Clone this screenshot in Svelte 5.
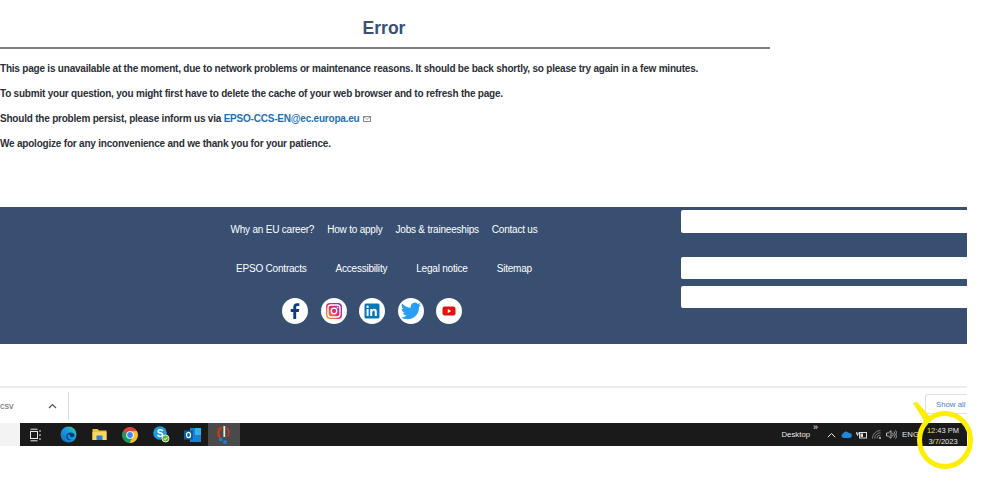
<script>
	const row1 = ['Why an EU career?', 'How to apply', 'Jobs & traineeships', 'Contact us'];
	const row2 = ['EPSO Contracts', 'Accessibility', 'Legal notice', 'Sitemap'];
</script>

<div class="page">
	<main class="content">
		<h1>Error</h1>
		<p>This page is unavailable at the moment, due to network problems or maintenance reasons. It should be back shortly, so please try again in a few minutes.</p>
		<p>To submit your question, you might first have to delete the cache of your web browser and to refresh the page.</p>
		<p>
			Should the problem persist, please inform us via <span class="mail">EPSO-CCS-EN@ec.europa.eu</span>
			<svg class="mail-icon" width="8" height="6" viewBox="0 0 8 6"><rect x=".5" y=".5" width="7" height="5" fill="none" stroke="#8a8a8a"/><path d="M.5.8 4 3.4 7.5.8" fill="none" stroke="#8a8a8a" stroke-width=".8"/></svg>
		</p>
		<p>We apologize for any inconvenience and we thank you for your patience.</p>
	</main>

	<footer class="footer">
		<div class="links">
			<nav class="row-one">
				{#each row1 as item}<span>{item}</span>{/each}
			</nav>
			<nav class="row-two">
				{#each row2 as item}<span>{item}</span>{/each}
			</nav>
			<div class="social">
				<span class="circle">
					<svg width="26" height="26" viewBox="0 0 26 26"><path d="M14.2 21v-7h2.6l.4-2.9h-3V9.400c0-.9.3-1.400 1.500-1.400h1.600V5.400c-.4 0-1.200-.1-2.200-.1-2.300 0-3.800 1.300-3.800 3.800v2H8.700V14h2.600v7z" fill="#0b3c87"/></svg>
				</span>
				<span class="circle">
					<svg width="26" height="26" viewBox="0 0 26 26">
						<defs><linearGradient id="ig" x1="0" y1="1" x2="1" y2="0"><stop offset="0" stop-color="#fdb32b"/><stop offset=".5" stop-color="#e5296b"/><stop offset="1" stop-color="#6a3bc9"/></linearGradient></defs>
						<rect x="5" y="5" width="16" height="16" rx="4" fill="url(#ig)"/>
						<rect x="7" y="7" width="12" height="12" rx="3" fill="none" stroke="#fff" stroke-width="1.300"/>
						<circle cx="13" cy="13" r="2.800" fill="none" stroke="#fff" stroke-width="1.300"/>
						<circle cx="16.500" cy="9.500" r=".8" fill="#fff"/>
					</svg>
				</span>
				<span class="circle">
					<svg width="26" height="26" viewBox="0 0 26 26">
						<rect x="5.500" y="5.500" width="15" height="15" rx="1.500" fill="#0a77b5"/>
						<rect x="7.600" y="11" width="2" height="7" fill="#fff"/>
						<circle cx="8.600" cy="8.800" r="1.200" fill="#fff"/>
						<path d="M11.200 11h1.900v1c.4-.7 1.100-1.200 2.200-1.200 1.900 0 2.500 1.200 2.500 3V18h-2v-3.700c0-.9-.3-1.600-1.200-1.600s-1.400.7-1.400 1.600V18h-2z" fill="#fff"/>
					</svg>
				</span>
				<span class="circle">
					<svg width="26" height="26" viewBox="0 0 24 24"><path transform="translate(2.600 2.600) scale(.78)" d="M23.950 4.570a10 10 0 0 1-2.820.77 4.960 4.960 0 0 0 2.160-2.720c-.95.550-2 .96-3.130 1.190a4.920 4.920 0 0 0-8.380 4.480C7.690 8.090 4.070 6.130 1.640 3.160a4.820 4.820 0 0 0-.67 2.480c0 1.710.87 3.210 2.190 4.100a4.900 4.900 0 0 1-2.230-.62v.06a4.920 4.920 0 0 0 3.950 4.830 5 5 0 0 1-2.210.08 4.940 4.940 0 0 0 4.600 3.420A9.870 9.870 0 0 1 0 19.540a14 14 0 0 0 7.560 2.210c9.050 0 14-7.500 14-13.980 0-.21 0-.42-.02-.63a9.940 9.940 0 0 0 2.410-2.570z" fill="#2a9df4"/></svg>
				</span>
				<span class="circle">
					<svg width="26" height="26" viewBox="0 0 26 26"><rect x="6.500" y="8.500" width="13" height="9" rx="2.200" fill="#e8110f"/><path d="M11.800 11v4l3.400-2z" fill="#fff"/></svg>
				</span>
			</div>
		</div>
		<div class="fields">
			<div class="field"></div>
			<div class="field second"></div>
			<div class="field third"></div>
		</div>
	</footer>

	<section class="downloads">
		<div class="file">
			<span class="file-name">csv</span>
			<svg width="9" height="6" viewBox="0 0 9 6"><path d="M1 5l3.500-3.500L8 5" fill="none" stroke="#555" stroke-width="1.200"/></svg>
		</div>
		<div class="show-all">Show all</div>
	</section>

	<div class="taskbar-row">
		<div class="taskbar">
			<div class="apps">
				<span class="app first">
					<svg width="14" height="14" viewBox="0 0 14 14" fill="none" stroke="#e8e8e8"><rect x="1.500" y="3.500" width="7" height="7"/><path d="M1.500 1.200h7M1.500 12.800h7M11 2v2M11 6v2M11 10v2" /></svg>
				</span>
				<span class="app">
					<svg width="17" height="17" viewBox="0 0 17 17">
						<defs><linearGradient id="edge" x1="0" y1="1" x2="1" y2="0"><stop offset="0" stop-color="#0f6cbd"/><stop offset=".6" stop-color="#1b9de2"/><stop offset="1" stop-color="#45d17c"/></linearGradient></defs>
						<circle cx="8.500" cy="8.500" r="8" fill="url(#edge)"/>
						<path d="M7 8.500c1-2.500 6-3 7.500.5.200 2-2 2.500-3.500 2-1.500-.5-.5-2-2-2.500-1.500-.3-2 1.500-1 3.500 1 1.500 3 2 4 1.800-3 1.500-7-.5-5-5.800z" fill="#0a3d7a"/>
					</svg>
				</span>
				<span class="app">
					<svg width="15" height="13" viewBox="0 0 15 13"><path d="M.5 1h5l1.500 1.500h7.500V12H.5z" fill="#f2c230"/><rect x=".5" y="4" width="14" height="8" fill="#f7d661"/><rect x="4.500" y="7.500" width="6" height="4.500" fill="#2f80c8"/></svg>
				</span>
				<span class="app">
					<svg width="16" height="16" viewBox="0 0 16 16">
						<circle cx="8" cy="8" r="7.800" fill="#db4437"/>
						<path d="M8 8 14.800 4A7.800 7.800 0 0 0 1.500 3.600L4.500 9z" fill="#db4437"/>
						<path d="M1.500 3.600A7.800 7.800 0 0 0 7.500 15.800L10.800 10 5 9z" fill="#0f9d58"/>
						<path d="M14.800 4.100A7.800 7.800 0 0 1 7.500 15.800L10.900 9.800 8 4.500z" fill="#fbc02d"/>
						<circle cx="8" cy="8" r="3.800" fill="#fff"/><circle cx="8" cy="8" r="2.900" fill="#4285f4"/>
					</svg>
				</span>
				<span class="app">
					<svg width="17" height="17" viewBox="0 0 17 17">
						<circle cx="7" cy="7" r="6.800" fill="#1b9ce0"/>
						<text x="7" y="10.500" class="skype">S</text>
						<circle cx="12.500" cy="12.500" r="3.500" fill="#6bb12f" stroke="#fff" stroke-width=".8"/>
						<path d="M10.900 12.500l1.200 1.200 2-2.200" fill="none" stroke="#fff"/>
					</svg>
				</span>
				<span class="app">
					<svg width="17" height="14" viewBox="0 0 17 14">
						<rect x="6" y="0" width="11" height="14" fill="#1a80cf"/>
						<rect x="11" y="0" width="6" height="7" fill="#35b0ea"/>
						<rect x="0" y="2.500" width="9" height="9" fill="#0a5fab"/>
						<ellipse cx="4.500" cy="7" rx="2" ry="2.600" fill="none" stroke="#fff" stroke-width="1.200"/>
					</svg>
				</span>
				<span class="app active">
					<svg width="16" height="20" viewBox="0 0 16 20">
						<path d="M6 2.500a6 6 0 0 0-2 9.800" fill="none" stroke="#c8391a" stroke-width="2.400"/>
						<path d="M10.500 2.500a6 6 0 0 1 1 8.800" fill="none" stroke="#c8391a" stroke-width="1.600"/>
						<rect x="7.400" y="1" width="1.800" height="11" fill="#e8e8e8"/>
						<circle cx="4.800" cy="14.500" r="2" fill="#2579c9"/>
						<circle cx="9" cy="17" r="2" fill="#2579c9"/>
					</svg>
				</span>
			</div>
			<div class="tray">
				<span class="desktop">Desktop</span>
				<span class="more">»</span>
				<svg class="caret" width="9" height="6" viewBox="0 0 9 6"><path d="M.8 5.200 4.500 1.500l3.700 3.700" fill="none" stroke="#eee" stroke-width="1"/></svg>
				<svg class="cloud" width="11" height="7" viewBox="0 0 11 7"><path d="M2.500 7a2.300 2.300 0 0 1-.3-4.500A3.300 3.300 0 0 1 8 2a2.500 2.500 0 0 1 .7 5z" fill="#1f86d8"/></svg>
				<svg class="battery" width="11" height="8" viewBox="0 0 11 8"><rect x="3.500" y="1.500" width="7" height="5.500" fill="none" stroke="#ddd"/><rect x="4.500" y="2.500" width="2.500" height="3.500" fill="#ddd"/><path d="M.5 1v2M2 1v2M0 3h3M1.500 3v2" stroke="#ddd" stroke-width=".8"/></svg>
				<svg class="wifi" width="10" height="9" viewBox="0 0 10 9"><path d="M.5 8.500a8 8 0 0 1 8-8M2.800 8.500a5.700 5.700 0 0 1 5.700-5.700M5 8.500a3.500 3.500 0 0 1 3.500-3.500" fill="none" stroke="#999" stroke-width=".8"/><circle cx="8" cy="8" r="1" fill="#ccc"/></svg>
				<svg class="volume" width="11" height="9" viewBox="0 0 11 9"><path d="M.5 3v3h1.800L5 8.300V.7L2.300 3z" fill="none" stroke="#ddd" stroke-width=".8"/><path d="M6.500 2.800a2.500 2.500 0 0 1 0 3.400M8 1.500a4.500 4.500 0 0 1 0 6M9.500.5a6 6 0 0 1 0 8" fill="none" stroke="#ddd" stroke-width=".7"/></svg>
				<span class="lang">ENG</span>
				<div class="clock">
					<span><i>12</i>:43 PM</span>
					<span>3<i>/7/</i>2023</span>
				</div>
			</div>
		</div>
	</div>

	<svg class="callout" width="70" height="75" viewBox="0 0 70 75">
		<path d="M0 1 L4 0 L18 16 L13 22z" fill="#ffee00"/>
		<ellipse cx="32" cy="38" rx="25.500" ry="26.500" fill="none" stroke="#ffee00" stroke-width="5"/>
	</svg>
</div>

<style>
	:global(body) {
		margin: 0;
		background: #fff;
	}

	.page {
		position: relative;
		width: 983px;
		height: 477px;
		overflow: hidden;
		font-family: 'Liberation Sans', Arial, sans-serif;
	}

	.content {
		width: 770px;
		height: 207px;
		font-size: 10px;
		letter-spacing: -0.21px;
		font-weight: 700;
		color: #2b3038;
	}

	h1 {
		margin: 0 0 14px;
		padding: 18px 2px 0 0;
		height: 29px;
		border-bottom: 2px solid #808080;
		text-align: center;
		font-size: 17.5px;
		letter-spacing: 0;
		line-height: 21px;
		color: #3a5174;
	}

	p {
		margin: 0 0 13px;
		line-height: 12px;
		white-space: nowrap;
	}

	.mail {
		color: #1f6fb2;
	}

	.mail-icon {
		margin-left: 1px;
	}

	.footer {
		display: grid;
		grid-template-columns: 681px 286px;
		width: 967px;
		height: 137px;
		background: #384f72;
		color: #fff;
		font-size: 10px;
		letter-spacing: -0.21px;
	}

	.links {
		display: flex;
		flex-direction: column;
		align-items: center;
		padding-left: 87px;
		box-sizing: border-box;
	}

	.row-one,
	.row-two {
		display: flex;
		white-space: nowrap;
		line-height: 12px;
	}

	.row-one {
		gap: 13px;
		margin-top: 17px;
	}

	.row-two {
		gap: 29px;
		margin-top: 27px;
	}

	.social {
		display: flex;
		gap: 12.5px;
		margin: 23px 24px 0 0;
	}

	.circle {
		display: flex;
		width: 26px;
		height: 26px;
		border-radius: 50%;
		background: #fff;
	}

	.fields {
		display: flex;
		flex-direction: column;
		padding-top: 3px;
	}

	.field {
		height: 23px;
		background: #fff;
		border-radius: 2px 0 0 2px;
	}

	.field.second {
		margin-top: 24px;
		height: 22px;
	}

	.field.third {
		margin-top: 7px;
		height: 22px;
	}

	.downloads {
		display: flex;
		align-items: center;
		justify-content: space-between;
		width: 967px;
		height: 37px;
		margin-top: 42px;
		border-top: 2px solid #ececec;
		box-sizing: border-box;
		font-size: 9px;
	}

	.file {
		display: flex;
		align-items: center;
		justify-content: space-between;
		width: 69px;
		height: 28px;
		padding-right: 11px;
		box-sizing: border-box;
		border-right: 1px solid #ddd;
		color: #666;
	}

	.show-all {
		align-self: flex-start;
		width: 42px;
		height: 20px;
		margin-top: 6px;
		padding-left: 10px;
		line-height: 19px;
		color: #4f7cd8;
		border: 1px solid #e0e0e0;
		border-right: 0;
		border-radius: 3px 0 0 3px;
		box-sizing: border-box;
		font-size: 7.8px;
		white-space: nowrap;
	}

	.taskbar-row {
		width: 967px;
		height: 23px;
		padding-left: 20px;
		box-sizing: border-box;
		background: #f3f3f3;
	}

	.taskbar {
		display: flex;
		justify-content: space-between;
		height: 23px;
		background: #1a1a1a;
		color: #e6e6e6;
		font-size: 7.8px;
	}

	.apps {
		display: flex;
	}

	.app {
		display: flex;
		align-items: center;
		justify-content: center;
		width: 31.2px;
		height: 23px;
	}

	.app.first {
		width: 32.5px;
	}

	.app.active {
		background: #4a4a4a;
	}

	.skype {
		font-family: 'Liberation Sans', Arial, sans-serif;
		font-size: 10px;
		font-weight: 700;
		fill: #fff;
		text-anchor: middle;
	}

	.tray {
		display: flex;
		align-items: center;
	}

	.desktop {
		margin-right: 3px;
	}

	.more {
		align-self: flex-start;
		line-height: 9px;
		margin-right: 9px;
		font-size: 9px;
	}

	.cloud {
		margin-left: 5px;
	}

	.battery {
		margin-left: 4px;
	}

	.wifi {
		margin-left: 5px;
	}

	.volume {
		margin-left: 4px;
	}

	.lang {
		margin-left: 5px;
	}

	.clock {
		display: flex;
		flex-direction: column;
		align-items: center;
		width: 48px;
		padding-top: 3px;
		line-height: 11px;
		font-size: 7.5px;
	}

	.clock i {
		font-style: normal;
		color: #e8e060;
	}

	.callout {
		position: absolute;
		left: 913px;
		top: 402px;
	}
</style>
